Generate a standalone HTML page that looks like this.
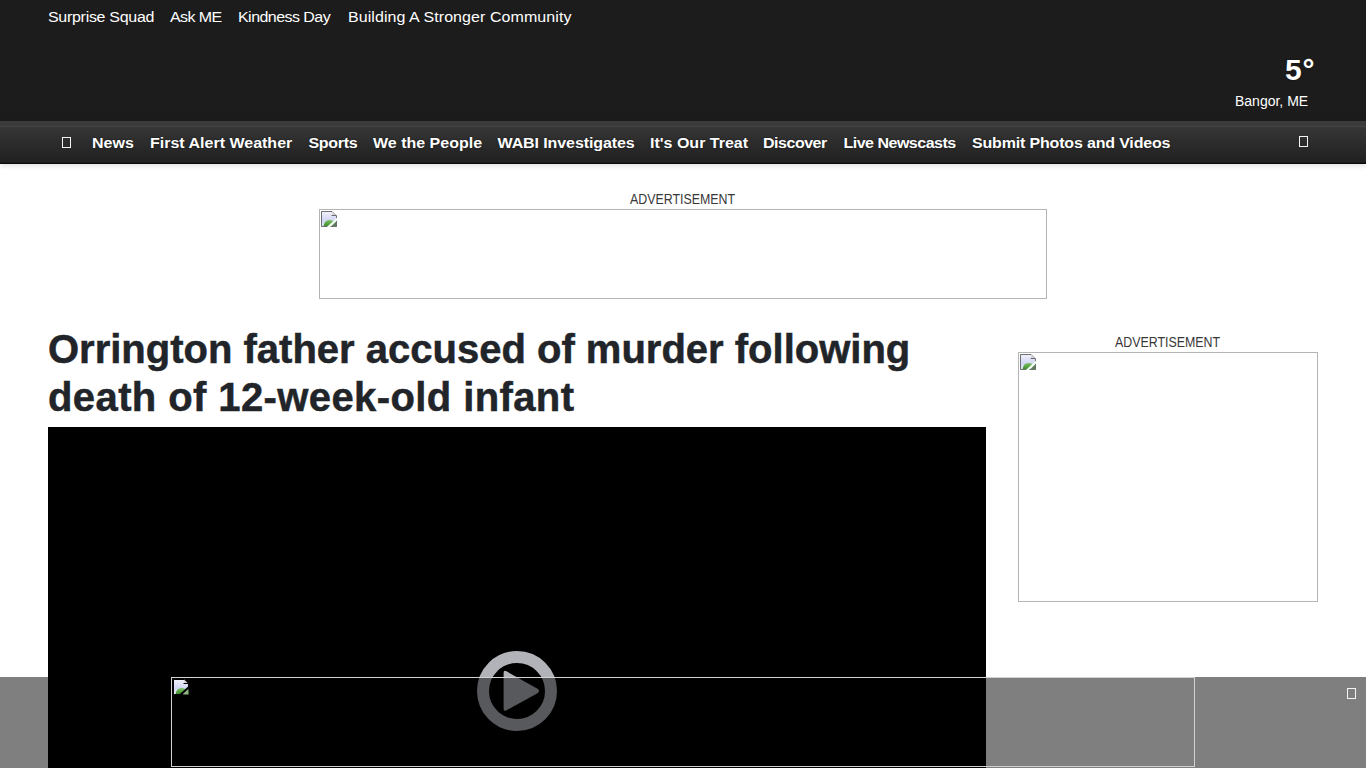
<!DOCTYPE html>
<html><head><meta charset="utf-8">
<style>
*{margin:0;padding:0;box-sizing:border-box}
html,body{width:1366px;height:768px;overflow:hidden;background:#fff;font-family:"Liberation Sans",sans-serif}
.a{position:absolute;white-space:nowrap}
#hdr{position:absolute;left:0;top:0;width:1366px;height:121px;background:#1c1c1c}
.tl{color:#fff;font-size:16px;line-height:20px;top:7px;transform:scaleY(0.92);transform-origin:0 15px}
#nav{position:absolute;left:0;top:121px;width:1366px;height:43px;
 background:linear-gradient(#3b3b3b 0,#3b3b3b 5px,#454545 5px,#454545 6px,#363636 6px,#2c2c2c 22px,#222 39px,#1f1f1f 41px,#1b1b1b 41px,#1b1b1b 42px,#0a0a0a 42px,#0a0a0a 43px);
 box-shadow:0 2px 5px rgba(0,0,0,.12)}
.nv{color:#fff;font-size:16px;font-weight:700;line-height:20px;top:133px;transform:scaleY(0.93);transform-origin:0 15px;text-shadow:0 0 2px rgba(0,0,0,.6)}
.tofu{position:absolute;border:1.5px solid #f4f4f4;width:9px;height:11px}
.adl{color:#383838;font-size:14px;line-height:16px;transform:scaleX(0.885);transform-origin:0 0}
.box{position:absolute;border:1px solid #b4b4b4;background:#fff}
h1{position:absolute;left:48px;top:324.5px;font-size:40px;line-height:48px;font-weight:700;color:#212529;white-space:nowrap;-webkit-text-stroke:0.5px #212529}
#video{position:absolute;left:48px;top:427px;width:938px;height:341px;background:#000}
#ovl{position:absolute;left:0;top:677px;width:1366px;height:91px;background:rgba(0,0,0,.5)}
.bi{position:absolute;width:16px;height:16px}
</style></head><body>
<div id="hdr"></div>
<span class="a tl" style="left:48px;letter-spacing:-0.3px">Surprise Squad</span>
<span class="a tl" style="left:170px;letter-spacing:-0.6px">Ask ME</span>
<span class="a tl" style="left:238px;letter-spacing:-0.55px">Kindness Day</span>
<span class="a tl" style="left:348px;letter-spacing:0.07px">Building A Stronger Community</span>
<span class="a" style="left:1285px;top:53px;color:#fff;font-size:30px;font-weight:700;line-height:34px;text-shadow:0 0 2px rgba(0,0,0,.5)">5</span><span class="a" style="left:1302.5px;top:52.5px;color:#fff;font-size:30px;font-weight:700;line-height:34px">°</span>
<span class="a" style="left:1235px;top:93px;color:#fff;font-size:14px;line-height:16px">Bangor, ME</span>

<div id="nav"></div>
<div class="tofu" style="left:62px;top:137px"></div>
<span class="a nv" style="left:92px">News</span>
<span class="a nv" style="left:150px">First Alert Weather</span>
<span class="a nv" style="left:308.5px;letter-spacing:-0.3px">Sports</span>
<span class="a nv" style="left:373px">We the People</span>
<span class="a nv" style="left:497.5px;letter-spacing:-0.09px">WABI Investigates</span>
<span class="a nv" style="left:650px">It's Our Treat</span>
<span class="a nv" style="left:763px;letter-spacing:-0.48px">Discover</span>
<span class="a nv" style="left:843.5px;letter-spacing:-0.5px">Live Newscasts</span>
<span class="a nv" style="left:972px;letter-spacing:-0.17px">Submit Photos and Videos</span>
<div class="tofu" style="left:1299px;top:136px"></div>

<span class="a adl" style="left:630px;top:191px">ADVERTISEMENT</span>
<div class="box" style="left:319px;top:209px;width:728px;height:90px"></div>
<div class="bi" style="left:321px;top:211px"><svg width="16" height="16" viewBox="0 0 16 16"><defs><linearGradient id="skyG" x1="0" y1="0" x2="0" y2="1"><stop offset="0" stop-color="#f2f2fc"/><stop offset="0.6" stop-color="#d0d6f2"/><stop offset="1" stop-color="#e6ecf6"/></linearGradient><linearGradient id="hillG" x1="0" y1="0" x2="0" y2="1"><stop offset="0" stop-color="#7cc060"/><stop offset="1" stop-color="#3e8e30"/></linearGradient></defs><path d="M0.5 0.5H11L15.5 5V15.5H0.5Z" fill="url(#skyG)" stroke="rgba(0,0,0,.55)"/><path d="M11 0.5L15.5 5H11Z" fill="#d6d6d6"/><path d="M10.5 4.5H15.5" stroke="#6c6c6c"/><path d="M2.5 15Q3.5 9.2 8.5 9Q11.5 9 13 10.5L8 15Z" fill="url(#hillG)"/><path d="M10 15.5L15.5 10V15.5Z" fill="#5f7d5c"/><path d="M6.8 16.6L16.6 7.6" stroke="#f4fff0" stroke-width="2"/></svg></div>

<h1><span>Orrington father accused of murder following</span><br><span style="letter-spacing:0.4px">death of 12-week-old infant</span></h1>
<div id="video"></div>
<svg class="a" style="left:476px;top:650px" width="82" height="82" viewBox="0 0 82 82"><circle cx="41" cy="41" r="34" fill="none" stroke="#b1b3b8" stroke-width="12"/><path d="M30.5 21.3Q27.6 19.6 27.6 23V58.6Q27.6 62 30.5 60.3L61.5 43.2Q64.6 41 61.5 38.8Z" fill="#b1b3b8"/></svg>

<span class="a adl" style="left:1115px;top:334px">ADVERTISEMENT</span>
<div class="box" style="left:1018px;top:352px;width:300px;height:250px"></div>
<div class="bi" style="left:1020px;top:354px"><svg width="16" height="16" viewBox="0 0 16 16"><path d="M0.5 0.5H11L15.5 5V15.5H0.5Z" fill="url(#skyG)" stroke="rgba(0,0,0,.55)"/><path d="M11 0.5L15.5 5H11Z" fill="#d6d6d6"/><path d="M10.5 4.5H15.5" stroke="#6c6c6c"/><path d="M2.5 15Q3.5 9.2 8.5 9Q11.5 9 13 10.5L8 15Z" fill="url(#hillG)"/><path d="M10 15.5L15.5 10V15.5Z" fill="#5f7d5c"/><path d="M6.8 16.6L16.6 7.6" stroke="#f4fff0" stroke-width="2"/></svg></div>

<div id="ovl"></div>
<div class="box" style="left:171px;top:677px;width:1024px;height:90px;background:transparent;border-color:#d2d2d2"></div>
<div class="bi" style="left:173px;top:679px"><svg width="16" height="16" viewBox="0 0 16 16"><path d="M0.5 0.5H11L15.5 5V15.5H0.5Z" fill="url(#skyG)" stroke="#000"/><path d="M11 0.5L15.5 5H11Z" fill="#d6d6d6"/><path d="M10.5 4.5H15.5" stroke="#000"/><path d="M2.5 15Q3.5 9.2 8.5 9Q11.5 9 13 10.5L8 15Z" fill="url(#hillG)"/><path d="M10 15.5L15.5 10V15.5Z" fill="#8cb87c"/><path d="M6.8 16.6L16.6 7.6" stroke="#000" stroke-width="2"/></svg></div>
<div class="tofu" style="left:1347px;top:688px;width:9px;height:11px"></div>
</body></html>
